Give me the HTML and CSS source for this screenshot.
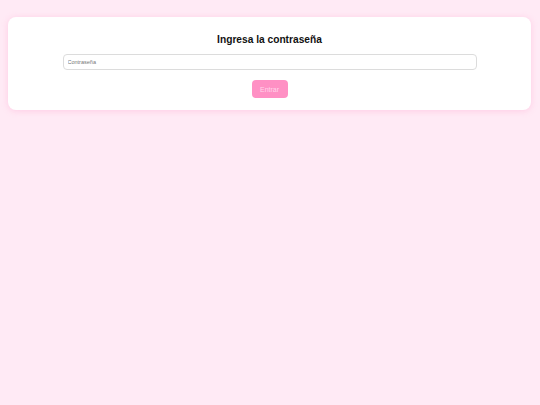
FILE: index.html
```html
<!DOCTYPE html>
<html lang="es">
<head>
<meta charset="utf-8">
<link rel="stylesheet" href="styles.css">
</head>
<body>
<div class="card">
  <h1 class="title">Ingresa la contraseña</h1>
  <input class="field" type="password" placeholder="Contraseña">
  <button class="btn">Entrar</button>
</div>
</body>
</html>
```
FILE: styles.css
```css
html, body { height: 100%; }
body {
  margin: 0;
  padding: 17px 8px 8px;
  box-sizing: border-box;
  background: #ffeaf5;
  font-family: "Liberation Sans", Arial, sans-serif;
}
.card {
  background: #fff;
  border-radius: 8px;
  box-shadow: 0 1px 6px rgba(255, 150, 200, 0.35);
  padding: 16px 16px 12px;
  display: flex;
  flex-direction: column;
  align-items: center;
  width: 523px;
  box-sizing: border-box;
}
.title {
  margin: 0;
  font-size: 10.2px;
  line-height: 14px;
  font-weight: 700;
  color: #111;
}
.field {
  margin-top: 7px;
  width: 414px;
  height: 16px;
  box-sizing: border-box;
  border: 1px solid #dcdcdc;
  border-radius: 4px;
  padding: 0 4px;
  font-family: inherit;
  font-size: 5.5px;
  outline: none;
}
.field::placeholder { color: #777; }
.btn {
  margin-top: 10px;
  width: 36px;
  height: 18px;
  border: none;
  border-radius: 4px;
  background: #ff90c4;
  color: #ffd6ea;
  font-family: inherit;
  font-size: 7px;
  padding: 0;
}
```
